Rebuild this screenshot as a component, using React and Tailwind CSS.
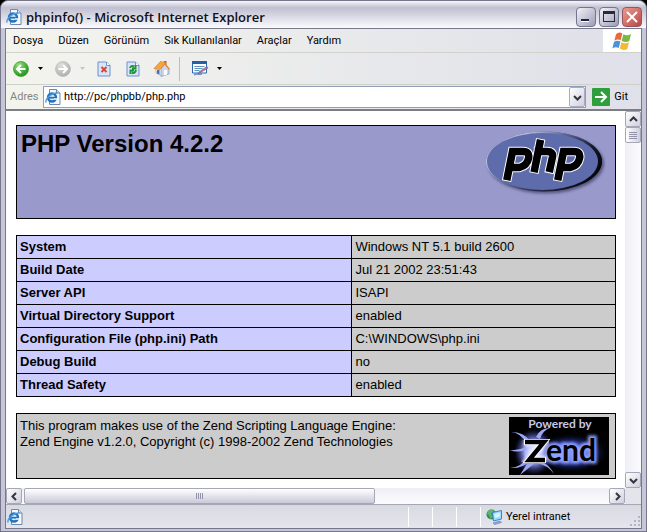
import React from "react";

const rows = [
  ["System", "Windows NT 5.1 build 2600"],
  ["Build Date", "Jul 21 2002 23:51:43"],
  ["Server API", "ISAPI"],
  ["Virtual Directory Support", "enabled"],
  ["Configuration File (php.ini) Path", "C:\\WINDOWS\\php.ini"],
  ["Debug Build", "no"],
  ["Thread Safety", "enabled"],
];

const menus = ["Dosya", "Düzen", "Görünüm", "Sık Kullanılanlar", "Araçlar", "Yardım"];

function IePage() {
  return (
    <svg width="16" height="16" viewBox="0 0 16 16" className="shrink-0" aria-hidden="true">
      <path d="M4.500.5h7l3.500 3.500v11.500H4.500z" fill="#f4f8fd" stroke="#6d87ad" />
      <path d="M11.500.5V4H15" fill="#d3e0f0" stroke="#6d87ad" />
      <circle cx="7" cy="8.500" r="4" fill="#dff0fc" stroke="#2372bd" strokeWidth="2.400" />
      <path d="M3.500 8.700h7.200" stroke="#2372bd" strokeWidth="1.800" />
      <path d="M9 10h4" stroke="#f4f8fd" strokeWidth="1.500" />
      <path d="M1.300 13.500C-.8 11 6 3.800 12.500 4" fill="none" stroke="#4e9bdc" strokeWidth="1.300" />
    </svg>
  );
}

function Arrow({ light }) {
  return (
    <svg width="5" height="3" viewBox="0 0 5 3" aria-hidden="true">
      <path d="M0 0h5L2.500 3z" fill={light ? "#c4c4c2" : "#000"} />
    </svg>
  );
}

function Chevron({ dir }) {
  const paths = {
    up: "M1 6l3.500-3.500L8 6",
    down: "M1 3l3.500 3.500L8 3",
    left: "M6 1L2.500 4.500 6 8",
    right: "M3 1l3.500 3.500L3 8",
  };
  return (
    <svg width="9" height="9" viewBox="0 0 9 9" aria-hidden="true">
      <path d={paths[dir]} fill="none" stroke="#34353d" strokeWidth="2" />
    </svg>
  );
}

function ScrollButton({ dir, label }) {
  return (
    <button
      aria-label={label}
      className="flex size-4 shrink-0 items-center justify-center rounded-xs border border-[#a5a6b8] bg-linear-to-br from-white to-[#cfd0de]"
    >
      <Chevron dir={dir} />
    </button>
  );
}

function Disc({ back }) {
  return (
    <svg width="16" height="16" viewBox="0 0 16 16" aria-hidden="true">
      <defs>
        <radialGradient id={back ? "discGreen" : "discGrey"} cx=".35" cy=".25" r=".85">
          <stop offset="0" stopColor={back ? "#9be07c" : "#dededc"} />
          <stop offset=".6" stopColor={back ? "#3fae34" : "#bfbfbd"} />
          <stop offset="1" stopColor={back ? "#258a20" : "#acacaa"} />
        </radialGradient>
      </defs>
      <circle cx="8" cy="8" r="7.500" fill={back ? "url(#discGreen)" : "url(#discGrey)"} stroke={back ? "#3a9534" : "#b8b8b6"} strokeWidth=".7" />
      <path d={back ? "M12.500 8H4.500M8 4L4 8l4 4" : "M3.500 8h8M8 4l4 4-4 4"} fill="none" stroke="#fff" strokeWidth="2" />
    </svg>
  );
}

function Sheet({ children }) {
  return (
    <svg width="14" height="16" viewBox="0 0 14 16" aria-hidden="true">
      <path d="M1 1h8.500L13 4.500V15H1z" fill="#d6e5fb" stroke="#7191cd" />
      <path d="M9.500 1v3.500H13" fill="#fff" stroke="#7191cd" />
      {children}
    </svg>
  );
}

function House() {
  return (
    <svg width="18" height="17" viewBox="0 0 18 17" aria-hidden="true">
      <path d="M11 1h2.500v4H11z" fill="#c95632" />
      <path d="M3 8l5-4.500L9 16l-6-3z" fill="#f5f7fb" stroke="#92a2bd" strokeWidth=".7" />
      <path d="M8 8l4-4 4 5v5l-8 2.500z" fill="#c5d7f2" stroke="#8198c2" strokeWidth=".7" />
      <path d="M1 8.500L7.500 1.500l5 1L7 9.500z" fill="#f3a63f" stroke="#d18427" strokeWidth=".7" />
      <path d="M12 2.500l5 6.500-1.200.8-4-5L7.500 9.800z" fill="#e98a2d" />
      <path d="M4 10h2.500v4.500L4 13.500z" fill="#536da0" />
      <path d="M11 10h3v4.500l-3 1z" fill="#fff" />
    </svg>
  );
}

function EditIcon() {
  return (
    <svg width="17" height="15" viewBox="0 0 17 15" aria-hidden="true">
      <path d="M.5.500h14v11.500H.5z" fill="#fafdff" stroke="#2c68ae" />
      <path d="M0 0h15v3H0z" fill="#245fa7" />
      <path d="M2.500 5.500h10M2.500 7.500h8M2.500 9.500h5" stroke="#6390c2" />
      <path d="M6 13l10-6-1-1.500-7.500 5z" fill="#b97d9c" stroke="#704d79" strokeWidth=".6" />
      <path d="M2 14c3-2 5 0 8-1" fill="none" stroke="#3c72bd" />
    </svg>
  );
}

function WindowsFlag() {
  return (
    <svg width="20" height="18" viewBox="0 0 20 18" aria-hidden="true">
      <path d="M4 2.300Q7-.8 10.300 1.500L8.700 8.200Q5.500 6.500 2.300 8.800z" fill="#e9693a" />
      <path d="M11.300 2.200Q15 4.600 19 2l-1.700 7Q13.500 11.300 9.700 8.800z" fill="#79b943" />
      <path d="M2 10Q5.200 7.600 8.400 9.500L6.800 16Q3.500 14.200.3 16.500z" fill="#4d91da" />
      <path d="M9.400 10.200Q13 12.300 17 10.200L15.300 17Q11.500 19 7.800 16.600z" fill="#f5ba31" />
    </svg>
  );
}

const phpStrokes =
  "M21.500 46.500L26.500 21.500H37Q44 21.500 42.500 28.500T33.500 37.500H25M48.800 38.500L53.800 13.500M52.500 21.500H61Q67.500 21.500 66.500 27L64 38.500M72.500 46.500L77.500 21.500H88Q95 21.500 93.500 28.500T84.500 37.500H76";

function PhpLogo() {
  return (
    <svg width="120" height="67" viewBox="0 0 120 67" role="img" aria-label="PHP logo">
      <defs>
        <linearGradient id="phpRim" x1="0" y1="0" x2="1" y2=".7">
          <stop offset="0" stopColor="#7380b5" />
          <stop offset=".25" stopColor="#e4e8f8" />
          <stop offset=".5" stopColor="#6974a9" />
          <stop offset=".75" stopColor="#15172c" />
          <stop offset="1" stopColor="#000" />
        </linearGradient>
        <linearGradient id="phpLower" x1="0" y1="0" x2="1" y2="0">
          <stop offset="0" stopColor="#6470a8" />
          <stop offset=".5" stopColor="#4b5486" />
          <stop offset="1" stopColor="#080911" />
        </linearGradient>
        <filter id="phpShadow" x="-10%" y="-10%" width="120%" height="125%">
          <feGaussianBlur stdDeviation="1.500" />
        </filter>
      </defs>
      <ellipse cx="60" cy="33.500" rx="58" ry="30" fill="#55557e" filter="url(#phpShadow)" />
      <ellipse cx="58" cy="31.500" rx="58" ry="30" fill="url(#phpLower)" />
      <ellipse cx="58" cy="31.500" rx="58" ry="30" fill="url(#phpRim)" opacity=".7" />
      <ellipse cx="56.500" cy="31.500" rx="55.500" ry="28.500" fill="#5f6cac" />
      <path d={phpStrokes} fill="none" stroke="#fff" strokeWidth="9.500" strokeLinecap="square" />
      <path d={phpStrokes} fill="none" stroke="#000" strokeWidth="7.500" strokeLinecap="square" />
    </svg>
  );
}

function ZendLogo() {
  return (
    <svg width="100" height="58" viewBox="0 0 100 58" role="img" aria-label="Powered by Zend">
      <defs>
        <radialGradient id="zendGlow">
          <stop offset="0" stopColor="#5b70f5" />
          <stop offset=".5" stopColor="#2c3aa8" />
          <stop offset="1" stopColor="#000" stopOpacity="0" />
        </radialGradient>
        <radialGradient id="zendFlash">
          <stop offset="0" stopColor="#fff" />
          <stop offset=".45" stopColor="#a8b1ff" />
          <stop offset="1" stopColor="#3038ae" stopOpacity="0" />
        </radialGradient>
        <filter id="zendBlur"><feGaussianBlur stdDeviation="1.500" /></filter>
      </defs>
      <path d="M0 0h100v58H0z" fill="#000" />
      <ellipse cx="62" cy="36" rx="38" ry="20" fill="url(#zendGlow)" />
      <ellipse cx="25" cy="35" rx="20" ry="23" fill="url(#zendFlash)" />
      <path d="M2 15q10 1 15 11l4-2Q15 15 2 15M1 51q12-1 16-10l4 3Q13 52 1 51M11 58l10-16 5 4zM27 20q4-9 14-9-8 3-10 11zM45 57q-4-9-15-14l-3 3q12 2 18 11M0 33q8 3 17 0v-3Q9 34 0 33" fill="#9ca6f2" />
      <g fontFamily="Lato, sans-serif">
        <text x="51" y="11" textAnchor="middle" fontSize="12" fontWeight="700" fill="#c5c8e7">Powered by</text>
        <text x="37" y="44" fontSize="30" fontWeight="700" fill="#8ea2ff" stroke="#8ea2ff" strokeWidth="5" filter="url(#zendBlur)">end</text>
        <text x="37" y="44" fontSize="30" fontWeight="700" fill="#000">end</text>
      </g>
      <path d="M15 25h20L20 43h17" fill="none" stroke="#eef0ff" strokeWidth="8" filter="url(#zendBlur)" />
      <path d="M15 25h20L20 43h17" fill="none" stroke="#fff" strokeWidth="6" />
      <path d="M16 25h19L20 43h16" fill="none" stroke="#000" strokeWidth="4.500" />
    </svg>
  );
}

function NetworkIcon() {
  return (
    <svg width="17" height="16" viewBox="0 0 17 16" aria-hidden="true">
      <circle cx="5.500" cy="5.500" r="5" fill="#2f8a5a" />
      <path d="M2 2q4-3 6 0L5 5l2 3-3 2q0-4-3-5z" fill="#5bb56a" />
      <path d="M6.500 3.500l9-2v8.500l-8 2z" fill="#9ad8ff" stroke="#3f86c9" />
      <path d="M8 5l6-1.500v4L9 9z" fill="#d6f1ff" />
      <path d="M7 14l7-2 1.500 1.500-7 2z" fill="#8fa8d8" stroke="#5f7db0" strokeWidth=".6" />
    </svg>
  );
}

function Grip() {
  return (
    <svg width="12" height="12" viewBox="0 0 12 12" className="self-end" aria-hidden="true">
      <path d="M9 1h2v2H9zM9 5h2v2H9zM5 5h2v2H5zM9 9h2v2H9zM5 9h2v2H5zM1 9h2v2H1z" fill="#b3b4c3" />
    </svg>
  );
}

const tool = "flex h-6 items-center justify-center";

export default function App() {
  return (
    <div className="bg-black">
      <div className="flex h-screen flex-col rounded-t-lg border border-[#77778c] bg-[#c5c6d8] px-1 pb-0.5 font-[Roboto,'Noto_Sans',sans-serif] text-[11px] leading-4 text-black">
        <header className="-mx-1 flex h-[27px] shrink-0 items-center gap-1 rounded-t-lg bg-linear-to-b from-[#f6f6fb] via-[#bfc0d1] via-25% to-[#fbfbfe] pt-1 pr-1 pl-[5px]">
          <IePage />
          <h1 className="flex-1 font-['Open_Sans','Noto_Sans',sans-serif] text-[13px] font-semibold text-[#101018]">phpinfo() - Microsoft Internet Explorer</h1>
          <div className="flex gap-[3px]">
            <button aria-label="Minimize" className="flex size-5 items-end rounded-sm border border-[#73748e] bg-linear-to-br from-[#f3f3fa] to-[#9c9db7] pb-1 pl-1">
              <span className="h-[3px] w-2 border-b border-white bg-[#24253a]" />
            </button>
            <button aria-label="Maximize" className="flex size-5 items-center justify-center rounded-sm border border-[#73748e] bg-linear-to-br from-[#f3f3fa] to-[#9c9db7]">
              <span className="h-[11px] w-3 border border-t-[3px] border-[#29293c]" />
            </button>
            <button aria-label="Close" className="flex size-5 items-center justify-center rounded-sm border border-[#94555f] bg-linear-to-br from-[#ed9c91] to-[#b84545]">
              <svg width="12" height="12" viewBox="0 0 12 12" aria-hidden="true"><path d="M1 1l10 10M11 1L1 11" stroke="#fff" strokeWidth="2" /></svg>
            </button>
          </div>
        </header>

        <div className="flex min-h-0 flex-1 flex-col border border-[#77788a] bg-[#ececef]">
          <nav className="flex h-6 shrink-0 border-b border-[#d2d2cc] bg-linear-to-r from-[#f4f4ee] to-[#dfe0e9]">
            <div className="flex flex-1 items-center gap-[15px] pl-[7px]">
              {menus.map((m) => <button key={m}>{m}</button>)}
            </div>
            <div className="flex w-[38px] items-center justify-center bg-white"><WindowsFlag /></div>
          </nav>

          <div className="flex h-8 shrink-0 items-center border-b border-[#d0d0cb] bg-linear-to-r from-[#f4f4ee] to-[#dfe0e9] pl-[7px]" role="toolbar">
            <button aria-label="Back" className={`${tool} gap-[9px]`}><Disc back /><Arrow /></button>
            <button aria-label="Forward" className={`${tool} ml-3 gap-[9px]`}><Disc /><Arrow light /></button>
            <button aria-label="Stop" className={`${tool} ml-3`}>
              <Sheet><path d="M4.500 6l5 5M9.500 6l-5 5" stroke="#d94830" strokeWidth="2" /></Sheet>
            </button>
            <button aria-label="Refresh" className={`${tool} ml-[15px]`}>
              <Sheet><path d="M4 7q1-3 4-1.500M9.500 4v3.500H6M10 9q-1 4-4 2.500M4.500 13V9.500H8" fill="none" stroke="#1f9434" strokeWidth="2" /></Sheet>
            </button>
            <button aria-label="Home" className={`${tool} ml-[13px]`}><House /></button>
            <span className="ml-2 h-6 w-px bg-[#bdbec4]" />
            <button aria-label="Edit" className={`${tool} ml-3 gap-2`}><EditIcon /><Arrow /></button>
          </div>

          <div className="flex h-6 shrink-0 items-center bg-linear-to-r from-[#f4f4ee] to-[#dfe0e9] pr-[13px] pl-1">
            <label htmlFor="address" className="w-[33px] text-[#85857f]">Adres</label>
            <div className="flex h-[22px] min-w-0 flex-1 items-center border border-[#8f9fb8] bg-white pl-px">
              <IePage />
              <input id="address" defaultValue="http://pc/phpbb/php.php" className="min-w-0 flex-1 pl-[3px] outline-none" />
              <button aria-label="Address list" className="flex h-5 w-4 items-center justify-center rounded-xs border border-[#a8acc2] bg-linear-to-br from-white to-[#cfd1df]"><Chevron dir="down" /></button>
            </div>
            <button className="ml-[6px] flex items-center gap-1">
              <svg width="18" height="18" viewBox="0 0 18 18" aria-hidden="true">
                <rect width="18" height="18" rx="1" fill="#2f9e3c" />
                <path d="M3 9h11M9 4l5 5-5 5" fill="none" stroke="#fff" strokeWidth="2" />
              </svg>
              Git
            </button>
          </div>

          <div className="flex min-h-0 flex-1 border-t-2 border-[#7d7d85]">
            <main className="min-w-0 flex-1 overflow-hidden bg-white pt-[14px] pr-[9px] pl-[10px] font-['Liberation_Sans',Arial,sans-serif] text-[13px]">
              <div className="mx-auto flex h-[94px] max-w-[600px] justify-between border border-black bg-[#9999cc] pt-1 pr-[9px] pl-1">
                <h2 className="text-2xl leading-7 font-bold">PHP Version 4.2.2</h2>
                <PhpLogo />
              </div>
              <table className="mx-auto mt-4 w-full max-w-[600px] border-collapse">
                <tbody>
                  {rows.map(([k, v]) => (
                    <tr key={k} className="h-[23px]">
                      <th scope="row" className="w-[56%] border border-black bg-[#ccccff] px-[3px] text-left font-bold">{k}</th>
                      <td className="border border-black bg-[#cccccc] px-[3px]">{v}</td>
                    </tr>
                  ))}
                </tbody>
              </table>
              <div className="mx-auto mt-4 flex h-[66px] max-w-[600px] justify-between border border-black bg-[#cccccc] pt-[3px] pr-[6px] pl-[3px]">
                <p className="pt-px">This program makes use of the Zend Scripting Language Engine:<br />Zend Engine v1.2.0, Copyright (c) 1998-2002 Zend Technologies</p>
                <ZendLogo />
              </div>
            </main>
            <div className="flex w-4 shrink-0 flex-col bg-linear-to-r from-[#eeeef5] to-[#fcfcff]">
              <ScrollButton dir="up" label="Scroll up" />
              <div className="flex h-4 flex-col items-center justify-center gap-px rounded-xs border border-[#a5a6b8] bg-linear-to-r from-white to-[#cfd0de]">
                {[0, 1, 2, 3].map((i) => <span key={i} className="h-px w-2 bg-[#9293a8]" />)}
              </div>
              <div className="flex-1" />
              <ScrollButton dir="down" label="Scroll down" />
            </div>
          </div>

          <div className="flex h-4 shrink-0 bg-linear-to-b from-[#eeeef5] to-[#fcfcff]">
            <ScrollButton dir="left" label="Scroll left" />
            <div className="flex min-w-0 flex-1 pl-0.5">
              <div className="flex w-[60%] items-center justify-center gap-px rounded-xs border border-[#a5a6b8] bg-linear-to-b from-white to-[#c9cad8]">
                {[0, 1, 2, 3].map((i) => <span key={i} className="h-[6px] w-px bg-[#9293a8]" />)}
              </div>
            </div>
            <ScrollButton dir="right" label="Scroll right" />
            <div className="w-4 bg-[#e4e4eb]" />
          </div>

          <footer className="flex h-6 shrink-0 items-center border-t border-[#a5a6b3] bg-linear-to-b from-[#d8d9e2] to-[#e5e6ec] pl-px">
            <IePage />
            <div className="flex-1" />
            <div className="h-5 w-6 border-l border-white" />
            <div className="h-5 w-6 border-l border-white" />
            <div className="h-5 w-6 border-l border-white" />
            <div className="flex h-5 w-[161px] items-center gap-[3px] border-l border-white pl-[5px]">
              <NetworkIcon />
              <span className="flex-1">Yerel intranet</span>
              <Grip />
            </div>
          </footer>
        </div>
      </div>
    </div>
  );
}
